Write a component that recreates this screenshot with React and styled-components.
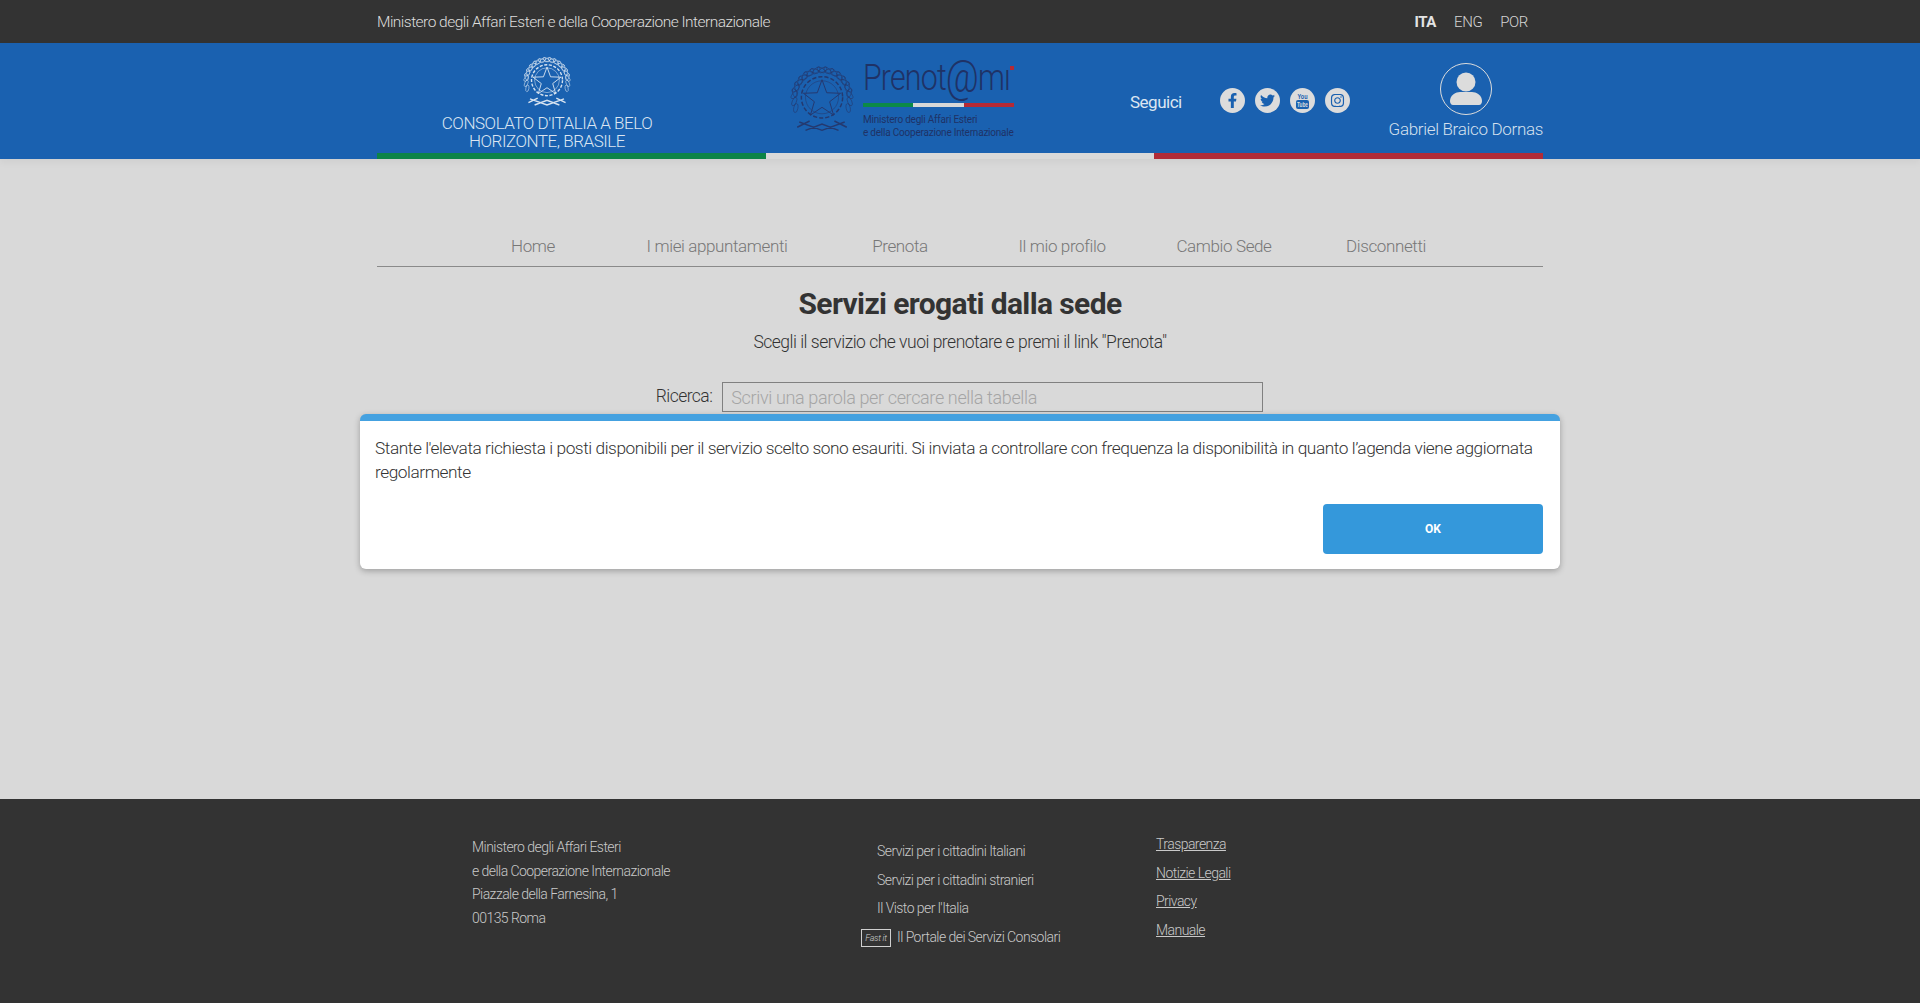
import React from "react";
import styled, { createGlobalStyle } from "styled-components";
import { FaFacebookF, FaTwitter, FaInstagram } from "react-icons/fa";

const FONT = `Roboto, "Open Sans", "Liberation Sans", sans-serif`;

const Global = createGlobalStyle`
  html, body { margin: 0; padding: 0; background: #d9d9d9; }
  body { font-family: ${FONT}; font-weight: 300; overflow: hidden; }
  * { box-sizing: border-box; }
`;

const Page = styled.div`
  position: relative;
  min-height: 1003px;
  display: flex;
  flex-direction: column;
`;
const Wrap = styled.div`
  width: 1166px;
  margin: 0 auto;
  display: flex;
  align-items: center;
`;
const TopBar = styled.div`
  height: 43px;
  background: #333;
  color: #ddd;
  font-size: 15.5px;
`;
const TopInner = styled(Wrap)`
  height: 43px;
  justify-content: space-between;
`;
const MinistryName = styled.span`
  letter-spacing: -0.52px;
`;
const Langs = styled.div`
  display: flex;
  gap: 18px;
  padding-right: 15px;
  font-size: 15px;
  letter-spacing: -0.4px;
`;
const Lang = styled.span`
  font-weight: ${(p) => (p.$active ? 700 : 300)};
  color: ${(p) => (p.$active ? "#e4e4e4" : "#d5d5d5")};
`;
const Header = styled.header`
  position: relative;
  height: 116px;
  background: #1a61b0;
  box-shadow: 0 3px 8px rgba(0, 0, 0, 0.05);
`;
const HeaderWrap = styled.div`
  width: 1166px;
  height: 116px;
  margin: 0 auto;
  display: flex;
  flex-direction: column;
`;
const HeaderRow = styled.div`
  height: 110px;
  display: flex;
`;
const Stripe = styled.div`
  height: 6px;
  display: flex;
`;
const StripeBit = styled.div`
  flex: 1;
  background: ${(p) => p.$c};
`;
const Consulate = styled.div`
  width: 340px;
  padding-top: 13px;
  display: flex;
  flex-direction: column;
  align-items: center;
  color: #dce6f2;
`;
const ConsulateName = styled.div`
  width: 230px;
  margin-top: 6px;
  font-size: 17px;
  line-height: 18px;
  text-align: center;
  letter-spacing: -0.47px;
`;
const LogoBlock = styled.div`
  margin-left: 73px;
  width: 224px;
  padding-top: 22px;
  display: flex;
  gap: 9px;
  align-items: flex-start;
`;
const LogoText = styled.div`
  display: flex;
  flex-direction: column;
  width: 151px;
  margin-top: -7px;
  color: #1f3266;
`;
const LogoWord = styled.div`
  width: max-content;
  font-size: 37px;
  line-height: 40px;
  font-weight: 300;
  letter-spacing: -1px;
  white-space: nowrap;
  transform: scaleX(0.82);
  transform-origin: left center;
`;
const LogoAt = styled.span`
  font-size: 44px;
  line-height: 0;
  vertical-align: -2px;
`;
const LogoDot = styled.span`
  position: absolute;
  left: 147px;
  top: 8px;
  width: 4px;
  height: 4px;
  background: #b52a35;
`;
const LogoHead = styled.div`
  position: relative;
  height: 40px;
`;
const LogoStripe = styled.div`
  display: flex;
  height: 4px;
  margin-top: 5px;
`;
const LogoSmall = styled.div`
  font-size: 10px;
  line-height: 13px;
  font-weight: 400;
  letter-spacing: -0.22px;
  white-space: nowrap;
`;
const LogoSmallGroup = styled.div`
  margin-top: 6px;
`;
const Follow = styled.div`
  margin-left: 116px;
  width: 90px;
  padding-top: 49px;
  font-size: 17px;
  font-weight: 400;
  letter-spacing: -0.5px;
  color: #dce6f2;
`;
const Socials = styled.div`
  display: flex;
  gap: 10px;
  padding-top: 45px;
`;
const SocialDot = styled.span`
  width: 25px;
  height: 25px;
  border-radius: 50%;
  background: #dcdcdc;
  color: #1a61b0;
  display: flex;
  align-items: center;
  justify-content: center;
  font-size: 15px;
`;
const Profile = styled.div`
  margin-left: auto;
  padding-top: 20px;
  display: flex;
  flex-direction: column;
  align-items: center;
  color: #d5e0ee;
`;
const Avatar = styled.div`
  width: 52px;
  height: 52px;
  border: 1px solid #dcdcdc;
  border-radius: 50%;
  display: flex;
  align-items: center;
  justify-content: center;
`;
const ProfileName = styled.div`
  margin-top: 4px;
  font-size: 17px;
  line-height: 20px;
  letter-spacing: -0.32px;
  white-space: nowrap;
`;
const Main = styled.main`
  flex: 1;
  display: flex;
  flex-direction: column;
  align-items: center;
`;
const Nav = styled.nav`
  width: 1166px;
  margin-top: 74px;
  height: 34px;
  padding-left: 66px;
  display: flex;
  border-bottom: 1px solid #8a8a8a;
`;
const NavItem = styled.a`
  width: ${(p) => p.$w}px;
  text-align: center;
  font-size: 17px;
  line-height: 26px;
  letter-spacing: -0.38px;
  color: #777;
`;
const Title = styled.h1`
  margin: 17px 0 0;
  font-size: 30px;
  line-height: 40px;
  font-weight: 700;
  letter-spacing: -0.62px;
  color: #333;
`;
const Subtitle = styled.p`
  margin: 6px 0 0;
  font-size: 17.5px;
  line-height: 24px;
  letter-spacing: -0.5px;
  color: #333;
`;
const Search = styled.div`
  display: flex;
  align-items: center;
  gap: 10px;
  margin: 28px 0 0;
  padding-right: 1px;
  font-size: 17.5px;
  letter-spacing: -0.55px;
  color: #333;
`;
const SearchLabel = styled.span`
  margin-top: -2px;
`;
const SearchInput = styled.div`
  width: 541px;
  height: 30px;
  border: 1px solid #808080;
  padding: 0 8px;
  font-size: 18px;
  line-height: 29px;
  letter-spacing: -0.36px;
  color: #a5a5a5;
`;
const Modal = styled.div`
  position: absolute;
  left: 360px;
  top: 414px;
  width: 1200px;
  height: 155px;
  background: #fff;
  border-top: 7px solid #44a1e0;
  border-radius: 6px;
  box-shadow: 0 2px 6px rgba(0, 0, 0, 0.28);
  padding: 15px 15px 0;
  display: flex;
  flex-direction: column;
`;
const ModalText = styled.p`
  margin: 0;
  font-size: 17.3px;
  line-height: 24px;
  letter-spacing: -0.45px;
  color: #333;
`;
const OkButton = styled.button`
  position: absolute;
  right: 17px;
  bottom: 15px;
  width: 220px;
  height: 50px;
  border: 0;
  border-radius: 4px;
  background: #3498db;
  color: #fff;
  font-family: ${FONT};
  font-weight: 700;
  font-size: 12px;
`;
const Footer = styled.footer`
  height: 204px;
  background: #333;
  color: #c9c9c9;
  font-size: 14px;
  letter-spacing: -0.55px;
`;
const FooterInner = styled.div`
  width: 1166px;
  margin: 0 auto;
  display: flex;
`;
const Address = styled.div`
  width: 405px;
  margin-left: 95px;
  padding-top: 37px;
  line-height: 23.5px;
`;
const Services = styled.div`
  width: 279px;
  padding-top: 40px;
  display: flex;
  flex-direction: column;
`;
const ServiceRow = styled.div`
  height: 28.7px;
  line-height: 24px;
  display: flex;
  align-items: flex-start;
  margin-left: ${(p) => (p.$fast ? "-16px" : 0)};
`;
const FastBadge = styled.span`
  width: 30px;
  height: 18px;
  margin: 4px 6px 0 0;
  border: 1px solid #d0d0d0;
  font-size: 9px;
  font-style: italic;
  line-height: 16px;
  letter-spacing: -0.3px;
  text-align: center;
  color: #d0d0d0;
`;
const Legal = styled.div`
  padding-top: 33px;
  display: flex;
  flex-direction: column;
`;
const LegalLink = styled.a`
  height: 28.7px;
  line-height: 24px;
  text-decoration: underline;
  color: #c9c9c9;
`;

const Emblem = ({ color, size, strokeW = 1 }) => {
  const leaves = [];
  for (let i = 0; i < 15; i++) {
    const a = (200 - i * 13.5) * (Math.PI / 180);
    const r = 27;
    [1, -1].forEach((s) => {
      const x = 32 + s * Math.cos(a) * r;
      const y = 33 - Math.sin(a) * r * 1.02;
      leaves.push(
        <ellipse
          key={`${i}${s}`}
          cx={x}
          cy={y}
          rx="2"
          ry="4.4"
          fill="none"
          stroke={color}
          strokeWidth={strokeW * 0.7}
          transform={`rotate(${s * (i * 13.5 + 10)} ${x} ${y})`}
        />
      );
    });
  }
  return (
    <svg width={size} height={size * 1.09} viewBox="1 1 62 67" fill="none">
      {leaves}
      <circle cx="32" cy="32" r="20" stroke={color} strokeWidth={strokeW * 1.8} strokeDasharray="4 2" />
      <circle cx="32" cy="32" r="16" stroke={color} strokeWidth={strokeW * 0.7} />
      <path
        d="M32 15l4.6 12.6 13.4.5-10.600 8.200 3.800 12.900-11.200-7.500-11.200 7.500 3.800-12.900L14 28.100l13.400-.5z"
        stroke={color}
        strokeWidth={strokeW * 1.2}
      />
      <path
        d="M10 56l22 8 22-8M8 61l12-6M56 61l-12-6M16 64l16-6 16 6"
        stroke={color}
        strokeWidth={strokeW * 1.8}
      />
    </svg>
  );
};

const YoutubeIcon = () => (
  <svg width="25" height="25" viewBox="0 0 25 25">
    <text x="12.500" y="11" textAnchor="middle" fontSize="8" fontWeight="700" fontFamily="Liberation Sans, sans-serif" fill="#1a61b0" textLength="10" lengthAdjust="spacingAndGlyphs">You</text>
    <rect x="6" y="12" width="13" height="9" rx="2" fill="#1a61b0" />
    <text x="12.500" y="19.200" textAnchor="middle" fontSize="7" fontWeight="700" fontFamily="Liberation Sans, sans-serif" fill="#dcdcdc" textLength="11" lengthAdjust="spacingAndGlyphs">Tube</text>
  </svg>
);

const UserIcon = () => (
  <svg width="34" height="34" viewBox="0 0 34 34" fill="#dcdcdc">
    <circle cx="17" cy="10" r="9.500" />
    <path d="M1 29c0-6 6-9 10-9h12c4 0 10 3 10 9 0 2-1 4-3 4H4c-2 0-3-2-3-4z" />
  </svg>
);

const navItems = [
  ["Home", 180],
  ["I miei appuntamenti", 188],
  ["Prenota", 178],
  ["Il mio profilo", 146],
  ["Cambio Sede", 178],
  ["Disconnetti", 146],
];

export default function App() {
  return (
    <Page>
      <Global />
      <TopBar>
        <TopInner>
          <MinistryName>Ministero degli Affari Esteri e della Cooperazione Internazionale</MinistryName>
          <Langs>
            <Lang $active>ITA</Lang>
            <Lang>ENG</Lang>
            <Lang>POR</Lang>
          </Langs>
        </TopInner>
      </TopBar>
      <Header>
        <HeaderWrap>
          <HeaderRow>
            <Consulate>
              <Emblem color="#d5e2f0" size={48} />
              <ConsulateName>CONSOLATO D'ITALIA A BELO HORIZONTE, BRASILE</ConsulateName>
            </Consulate>
            <LogoBlock>
              <Emblem color="#24396f" size={64} strokeW={0.8} />
              <LogoText>
                <LogoHead>
                  <LogoWord>Prenot<LogoAt>@</LogoAt>mı</LogoWord>
                  <LogoDot />
                </LogoHead>
                <LogoStripe>
                  <StripeBit $c="#0c8a47" />
                  <StripeBit $c="#d8d8d8" />
                  <StripeBit $c="#b52a35" />
                </LogoStripe>
                <LogoSmallGroup>
                  <LogoSmall>Ministero degli Affari Esteri</LogoSmall>
                  <LogoSmall>e della Cooperazione Internazionale</LogoSmall>
                </LogoSmallGroup>
              </LogoText>
            </LogoBlock>
            <Follow>Seguici</Follow>
            <Socials>
              <SocialDot><FaFacebookF /></SocialDot>
              <SocialDot><FaTwitter /></SocialDot>
              <SocialDot><YoutubeIcon /></SocialDot>
              <SocialDot><FaInstagram /></SocialDot>
            </Socials>
            <Profile>
              <Avatar><UserIcon /></Avatar>
              <ProfileName>Gabriel Braico Dornas</ProfileName>
            </Profile>
          </HeaderRow>
          <Stripe>
            <StripeBit $c="#0c8447" />
            <StripeBit $c="#d9d9d9" />
            <StripeBit $c="#b12c38" />
          </Stripe>
        </HeaderWrap>
      </Header>
      <Main>
        <Nav>
          {navItems.map(([label, w]) => (
            <NavItem key={label} $w={w}>{label}</NavItem>
          ))}
        </Nav>
        <Title>Servizi erogati dalla sede</Title>
        <Subtitle>Scegli il servizio che vuoi prenotare e premi il link "Prenota"</Subtitle>
        <Search>
          <SearchLabel>Ricerca:</SearchLabel>
          <SearchInput>Scrivi una parola per cercare nella tabella</SearchInput>
        </Search>
      </Main>
      <Footer>
        <FooterInner>
          <Address>
            Ministero degli Affari Esteri<br />
            e della Cooperazione Internazionale<br />
            Piazzale della Farnesina, 1<br />
            00135 Roma
          </Address>
          <Services>
            <ServiceRow>Servizi per i cittadini Italiani</ServiceRow>
            <ServiceRow>Servizi per i cittadini stranieri</ServiceRow>
            <ServiceRow>Il Visto per l'Italia</ServiceRow>
            <ServiceRow $fast><FastBadge>Fast it</FastBadge>Il Portale dei Servizi Consolari</ServiceRow>
          </Services>
          <Legal>
            <LegalLink>Trasparenza</LegalLink>
            <LegalLink>Notizie Legali</LegalLink>
            <LegalLink>Privacy</LegalLink>
            <LegalLink>Manuale</LegalLink>
          </Legal>
        </FooterInner>
      </Footer>
      <Modal>
        <ModalText>
          Stante l'elevata richiesta i posti disponibili per il servizio scelto sono esauriti. Si inviata a controllare con frequenza la disponibilità in quanto l’agenda viene aggiornata regolarmente
        </ModalText>
        <OkButton>OK</OkButton>
      </Modal>
    </Page>
  );
}
